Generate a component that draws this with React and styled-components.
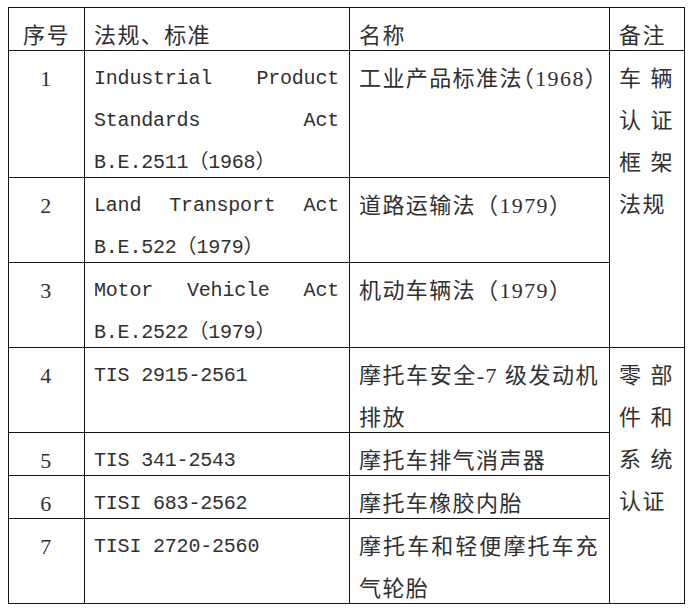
import React from "react";
import styled, { createGlobalStyle } from "styled-components";

const GlobalStyle = createGlobalStyle`
  html, body {
    margin: 0;
    padding: 0;
    background: #ffffff;
  }
  body {
    font-family: "Liberation Serif", "Noto Sans CJK SC", serif;
  }
`;

const Page = styled.div`
  padding: 7px 0 0 8px;
  background: #ffffff;
`;

const Table = styled.table`
  border-collapse: collapse;
  table-layout: fixed;
  width: 676px;
`;

const Cell = styled.td`
  border: 1px solid #141414;
  vertical-align: top;
  padding: ${(p) => (p.$center ? "0" : "0 10px 0 9px")};
  text-align: ${(p) => (p.$center ? "center" : "justify")};
  text-align-last: ${(p) => (p.$center ? "center" : "left")};
  font-family: ${(p) =>
    p.$mono
      ? `"Liberation Mono", "Noto Sans CJK SC", monospace`
      : `"Liberation Serif", "Noto Sans CJK SC", serif`};
  font-size: ${(p) => (p.$mono ? "20px" : "22px")};
  font-weight: 400;
  letter-spacing: ${(p) => (p.$mono ? "-0.2px" : "1.4px")};
  line-height: 42px;
  color: #303030;
  word-break: normal;
  overflow-wrap: normal;
`;

const CellText = styled.div`
  padding-top: 7px;
  margin-bottom: -7px;
`;

const Halt = styled.span`
  font-feature-settings: "halt";
`;

const rows = [
  {
    no: "1",
    law: "Industrial Product Standards Act B.E.2511（1968）",
    name: (
      <>
        工业产品标准法<Halt>（</Halt>1968<Halt>）</Halt>
      </>
    ),
    note: "车辆认证框架法规",
    span: 3,
  },
  { no: "2", law: "Land Transport Act B.E.522（1979）", name: "道路运输法（1979）" },
  { no: "3", law: "Motor Vehicle Act B.E.2522（1979）", name: "机动车辆法（1979）" },
  {
    no: "4",
    law: "TIS 2915-2561",
    name: "摩托车安全-7 级发动机排放",
    note: "零部件和系统认证",
    span: 4,
  },
  { no: "5", law: "TIS 341-2543", name: "摩托车排气消声器" },
  { no: "6", law: "TISI 683-2562", name: "摩托车橡胶内胎" },
  { no: "7", law: "TISI 2720-2560", name: "摩托车和轻便摩托车充气轮胎" },
];

export default function App() {
  return (
    <>
      <GlobalStyle />
      <Page>
        <Table>
          <colgroup>
            <col style={{ width: 76 }} />
            <col style={{ width: 265 }} />
            <col style={{ width: 260 }} />
            <col style={{ width: 75 }} />
          </colgroup>
          <thead>
            <tr>
              <Cell as="th" $center>
                <CellText>序号</CellText>
              </Cell>
              <Cell as="th">
                <CellText>法规、标准</CellText>
              </Cell>
              <Cell as="th">
                <CellText>名称</CellText>
              </Cell>
              <Cell as="th">
                <CellText>备注</CellText>
              </Cell>
            </tr>
          </thead>
          <tbody>
            {rows.map((r) => (
              <tr key={r.no}>
                <Cell $center>
                  <CellText>{r.no}</CellText>
                </Cell>
                <Cell $mono>
                  <CellText>{r.law}</CellText>
                </Cell>
                <Cell>
                  <CellText>{r.name}</CellText>
                </Cell>
                {r.note && (
                  <Cell rowSpan={r.span}>
                    <CellText>{r.note}</CellText>
                  </Cell>
                )}
              </tr>
            ))}
          </tbody>
        </Table>
      </Page>
    </>
  );
}
